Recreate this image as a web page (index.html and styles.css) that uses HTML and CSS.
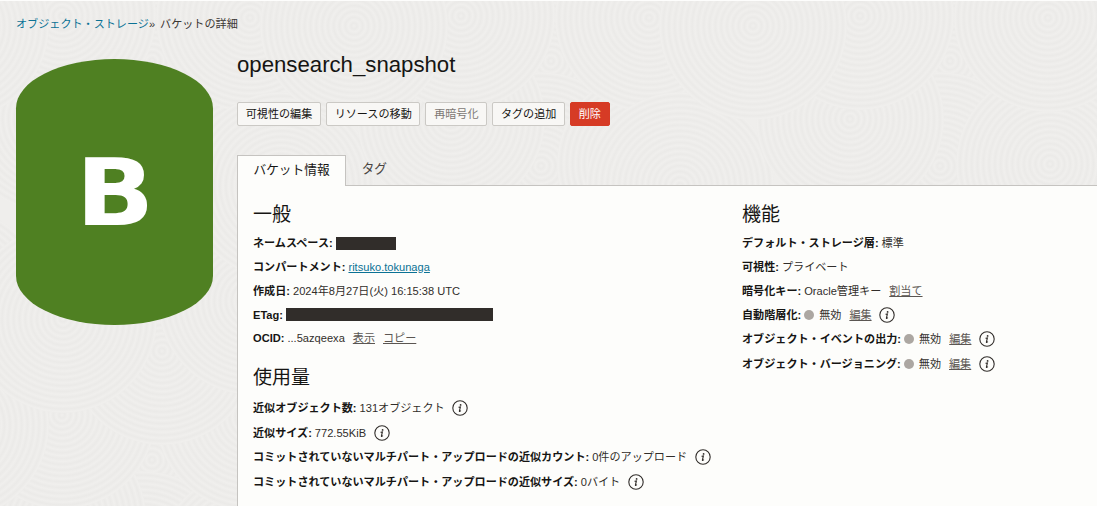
FILE: index.html
```html
<!DOCTYPE html>
<html lang="ja">

<head>
    <meta charset="UTF-8">
    <meta name="viewport" content="width=device-width, initial-scale=1.0">
    <title>バケットの詳細</title>
    <link rel="stylesheet" href="styles.css">
</head>

<body>
    <!-- background pattern and shared icons -->
    <svg class="pattern" width="1097" height="505" aria-hidden="true">
        <defs>
            <radialGradient id="rings" gradientUnits="userSpaceOnUse" cx="0" cy="0" r="5.8" spreadMethod="repeat">
                <stop offset="0" stop-color="#f0efed" />
                <stop offset="0.5" stop-color="#ebeae8" />
                <stop offset="1" stop-color="#f0efed" />
            </radialGradient>
            <circle id="swirl" r="94" fill="url(#rings)" />
            <g id="tile">
                <use href="#swirl" x="250" y="60" />
                <use href="#swirl" x="260" y="350" />
                <use href="#swirl" x="50" y="300" />
                <use href="#swirl" x="350" y="300" />
                <use href="#swirl" x="240" y="165" />
                <use href="#swirl" x="350" y="163" />
                <use href="#swirl" x="-20" y="185" />
                <use href="#swirl" x="161" y="318" />
                <use href="#swirl" x="348" y="17" />
                <use href="#swirl" x="150" y="118" />
                <use href="#swirl" x="160" y="15" />
                <use href="#swirl" x="53" y="25" />
            </g>
            <symbol id="info" viewBox="0 0 16 16">
                <circle cx="8" cy="8" r="7.2" fill="none" stroke="#312d2a" stroke-width="1.1" />
                <circle cx="8.6" cy="4.9" r="0.9" fill="#312d2a" />
                <path d="M6.6 7.4l1.8-.4-1 4c-.1.6.5.5 1.5-.4" fill="none" stroke="#312d2a" stroke-width="1.1" />
            </symbol>
        </defs>
        <use href="#tile" x="-98" y="399" />
        <use href="#tile" x="-98" y="0" />
        <use href="#tile" x="301" y="0" />
        <use href="#tile" x="700" y="0" />
    </svg>

    <nav class="breadcrumb">
        <a href="#">オブジェクト・ストレージ</a><span class="sep">»</span><span>バケットの詳細</span>
    </nav>

    <main>
        <div class="bucket"><span>B</span></div>

        <div class="content">
            <h1>opensearch_snapshot</h1>
            <div class="actions">
                <button>可視性の編集</button>
                <button>リソースの移動</button>
                <button disabled>再暗号化</button>
                <button>タグの追加</button>
                <button class="danger">削除</button>
            </div>

            <div class="tabs">
                <div class="tab active">バケット情報</div>
                <div class="tab">タグ</div>
            </div>

            <div class="panel">
                <div class="col">
                    <section>
                        <h2>一般</h2>
                        <p><b>ネームスペース:</b><span class="mask short"></span></p>
                        <p><b>コンパートメント:</b><a href="#">ritsuko.tokunaga</a></p>
                        <p><b>作成日:</b><span>2024年8月27日(火) 16:15:38 UTC</span></p>
                        <p><b>ETag:</b><span class="mask long"></span></p>
                        <p><b>OCID:</b><span>...5azqeexa</span><a class="act" href="#">表示</a><a class="act" href="#">コピー</a></p>
                    </section>
                    <section class="usage">
                        <h2>使用量</h2>
                        <p><b>近似オブジェクト数:</b><span>131オブジェクト</span><svg class="info"><use href="#info" /></svg></p>
                        <p><b>近似サイズ:</b><span>772.55KiB</span><svg class="info"><use href="#info" /></svg></p>
                        <p><b>コミットされていないマルチパート・アップロードの近似カウント:</b><span>0件のアップロード</span><svg class="info"><use href="#info" /></svg></p>
                        <p><b>コミットされていないマルチパート・アップロードの近似サイズ:</b><span>0バイト</span><svg class="info"><use href="#info" /></svg></p>
                    </section>
                </div>
                <div class="col features">
                    <section>
                        <h2>機能</h2>
                        <p><b>デフォルト・ストレージ層:</b><span>標準</span></p>
                        <p><b>可視性:</b><span>プライベート</span></p>
                        <p><b>暗号化キー:</b><span>Oracle管理キー</span><a class="act" href="#">割当て</a></p>
                        <p class="tall"><b>自動階層化:</b><i class="dot"></i><span>無効</span><a class="act" href="#">編集</a><svg class="info"><use href="#info" /></svg></p>
                        <p class="tall"><b>オブジェクト・イベントの出力:</b><i class="dot"></i><span>無効</span><a class="act" href="#">編集</a><svg class="info"><use href="#info" /></svg></p>
                        <p class="tall"><b>オブジェクト・バージョニング:</b><i class="dot"></i><span>無効</span><a class="act" href="#">編集</a><svg class="info"><use href="#info" /></svg></p>
                    </section>
                </div>
            </div>
        </div>
    </main>
</body>

</html>
```
FILE: styles.css
```css
* {
    box-sizing: border-box;
}

body {
    margin: 0;
    height: 506px;
    overflow: hidden;
    border-top: 1px solid #fdfdfc;
    background-color: #efeeec;
    color: #161513;
    font-family: "Liberation Sans", "Noto Sans CJK JP", sans-serif;
    font-size: 11.1px;
    line-height: 16px;
}

h1,
h2,
p {
    margin: 0;
    font-weight: normal;
}

a {
    color: #0b7295;
}

.pattern {
    position: absolute;
    left: 0;
    top: 1px;
    z-index: -1;
}

.breadcrumb {
    display: flex;
    height: 47px;
    padding: 15px 16px 0;
    color: #3c3835;
}

.breadcrumb a {
    text-decoration: none;
}

.sep {
    margin-right: 5px;
}

main {
    display: flex;
    gap: 24px;
    padding-left: 16px;
}

.bucket {
    flex: none;
    display: flex;
    align-items: center;
    justify-content: center;
    width: 197px;
    height: 266px;
    margin-top: 11px;
    padding: 3px 0 0 2px;
    border-radius: 50% / 18.5%;
    background-color: #4f8022;
    color: white;
    font-family: "DejaVu Sans", sans-serif;
    font-size: 92px;
    font-weight: bold;
}

.bucket span {
    transform: scaleX(1.12);
}

.content {
    flex: 1;
    min-width: 0;
}

h1 {
    height: 54px;
    padding-top: 4px;
    font-size: 22.2px;
    line-height: 26px;
}

.actions {
    display: flex;
    gap: 5px;
    height: 53px;
}

button {
    height: 24px;
    padding: 0 7.7px;
    border: 1px solid #cbc9c5;
    border-radius: 2px;
    background-color: #f8f7f5;
    color: #161513;
    font: inherit;
    line-height: 20px;
}

button:disabled {
    color: #7c7874;
}

button.danger {
    border-color: #d63b25;
    background-color: #d63b25;
    color: white;
}

.tabs {
    display: flex;
    height: 30px;
    font-size: 12.7px;
}

.tab {
    padding: 6px 15.5px;
    color: #4a4643;
}

.tab.active {
    position: relative;
    border: 1px solid #c5c3c0;
    border-bottom: none;
    background-color: #fdfdfb;
    color: #161513;
    height: 31px;
    z-index: 1;
}

.panel {
    display: flex;
    height: 340px;
    padding: 17.5px 0 0 15px;
    border: 1px solid #c5c3c0;
    border-right: none;
    background-color: #fdfdfb;
}

.col {
    flex: none;
    width: 489px;
}

.features {
    flex: 1;
    min-width: 0;
}

h2 {
    height: 27.8px;
    font-size: 19px;
    line-height: 22px;
}

p {
    display: flex;
    align-items: center;
    height: 23.8px;
    color: #312d2a;
    white-space: nowrap;
}

b {
    margin-right: 3px;
    color: #161513;
}

.usage {
    padding-top: 17.2px;
}

.usage h2 {
    height: 28.5px;
}

.usage p,
p.tall {
    height: 24.5px;
}

.act {
    margin-left: 8px;
    color: #5b5652;
}

.mask {
    height: 13px;
    background-color: #312d2a;
}

.short {
    width: 60px;
}

.long {
    width: 207px;
}

.dot {
    width: 10px;
    height: 10px;
    margin-right: 5px;
    border-radius: 50%;
    background-color: #aca7a2;
}

.info {
    width: 16px;
    height: 16px;
    margin-left: 7.5px;
}
```
